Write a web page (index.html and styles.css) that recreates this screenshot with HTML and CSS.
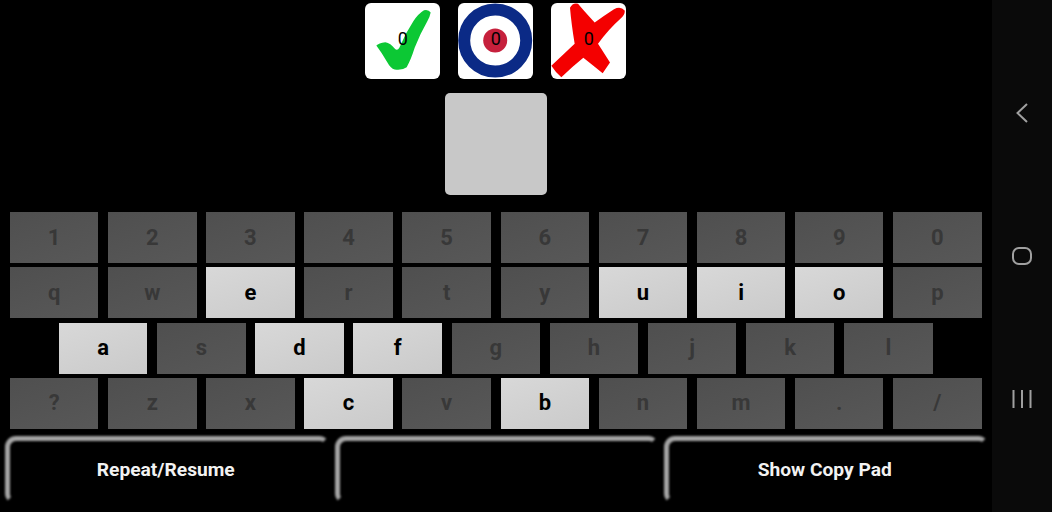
FILE: index.html
```html
<!DOCTYPE html>
<html lang="en">
<head>
    <meta charset="UTF-8">
    <title>Morse Trainer</title>
    <link rel="stylesheet" href="styles.css">
</head>
<body>
    <div class="app">
        <!-- Score tiles -->
        <div class="scores">
            <div class="tile">
                <svg class="tile-icon" viewBox="15 7.5 225 228">
                    <path fill="#0cc834" d="M212 36 Q206 26 192 29 Q174 40 160 62 Q136 98 118 142 Q112 152 104 144 Q92 128 76 125 Q56 128 49 135 Q66 158 80 182 Q92 204 104 207 Q124 211 140 200 Q152 180 164 142 Q180 100 202 62 Q210 48 212 36 Z"/>
                </svg>
                <span class="count">0</span>
            </div>
            <div class="tile">
                <svg class="tile-icon" viewBox="0 0 75 76">
                    <circle cx="37.2" cy="37.5" r="31" fill="none" stroke="#0b2a86" stroke-width="12"/>
                    <circle cx="37.2" cy="37.5" r="12" fill="#c6203c"/>
                </svg>
                <span class="count">0</span>
            </div>
            <div class="tile">
                <svg class="tile-icon" viewBox="19 7.5 225 228">
                    <path fill="#f40000" d="M76 22 Q84 6 100 10 Q120 34 150 66 Q180 44 208 26 Q228 16 240 30 Q242 42 228 54 Q190 88 160 130 Q178 158 196 186 L174 218 Q146 196 116 172 Q84 198 50 230 Q34 218 20 196 Q54 164 90 130 Q80 70 76 22 Z"/>
                </svg>
                <span class="count">0</span>
            </div>
        </div>

        <div class="letter-box"></div>

        <!-- Keyboard -->
        <div class="keyboard">
            <div class="key-row">
                <div class="key">1</div>
                <div class="key">2</div>
                <div class="key">3</div>
                <div class="key">4</div>
                <div class="key">5</div>
                <div class="key">6</div>
                <div class="key">7</div>
                <div class="key">8</div>
                <div class="key">9</div>
                <div class="key">0</div>
            </div>
            <div class="key-row">
                <div class="key">q</div>
                <div class="key">w</div>
                <div class="key active">e</div>
                <div class="key">r</div>
                <div class="key">t</div>
                <div class="key">y</div>
                <div class="key active">u</div>
                <div class="key active">i</div>
                <div class="key active">o</div>
                <div class="key">p</div>
            </div>
            <div class="key-row">
                <div class="key active">a</div>
                <div class="key">s</div>
                <div class="key active">d</div>
                <div class="key active">f</div>
                <div class="key">g</div>
                <div class="key">h</div>
                <div class="key">j</div>
                <div class="key">k</div>
                <div class="key">l</div>
            </div>
            <div class="key-row">
                <div class="key">?</div>
                <div class="key">z</div>
                <div class="key">x</div>
                <div class="key active">c</div>
                <div class="key">v</div>
                <div class="key active">b</div>
                <div class="key">n</div>
                <div class="key">m</div>
                <div class="key">.</div>
                <div class="key">/</div>
            </div>
        </div>

        <!-- Bottom buttons -->
        <div class="actions">
            <div class="action">Repeat/Resume</div>
            <div class="action"></div>
            <div class="action">Show Copy Pad</div>
        </div>
    </div>

    <!-- Android nav bar -->
    <div class="navbar">
        <svg class="nav-icon" viewBox="0 0 24 24">
            <path d="M17 3 L7.5 12 L17 21"/>
        </svg>
        <svg class="nav-icon" viewBox="0 0 24 24">
            <rect x="3" y="4" width="18" height="16" rx="6"/>
        </svg>
        <svg class="nav-icon" viewBox="0 0 24 24">
            <path d="M3.5 3 V21 M12 3 V21 M20.5 3 V21"/>
        </svg>
    </div>
</body>
</html>
```

FILE: styles.css
```css
/* Basic reset */
* {
    margin: 0;
    padding: 0;
    box-sizing: border-box;
}

body {
    display: flex;
    width: 1052px;
    height: 512px;
    overflow: hidden;
    background-color: #000;
    font-family: 'Roboto', sans-serif;
}

.app {
    width: 992px;
    display: flex;
    flex-direction: column;
    align-items: center;
    padding: 2.5px 0.5px 0 0;
}

/* Score tiles */
.scores {
    display: flex;
    gap: 18px;
}

.tile {
    position: relative;
    width: 75px;
    height: 76px;
    background-color: #fff;
    border-radius: 6px;
    overflow: hidden;
}

.tile-icon {
    display: block;
    width: 100%;
    height: 100%;
}

.count {
    position: absolute;
    top: 26px;
    left: 0;
    right: 0;
    text-align: center;
    font-size: 18px;
    line-height: 20px;
    color: #000;
}

.letter-box {
    width: 102px;
    height: 102.5px;
    margin-top: 14px;
    background-color: #c8c8c8;
    border-radius: 5px;
}

/* Keyboard */
.keyboard {
    width: 100%;
    display: flex;
    flex-direction: column;
    align-items: center;
    gap: 4.33px;
    margin-top: 17px;
}

.key-row {
    display: flex;
    gap: 9.65px;
}

.key {
    width: 88.5px;
    height: 51px;
    display: flex;
    align-items: center;
    justify-content: center;
    padding-bottom: 1px;
    background: linear-gradient(160deg, #4f4f4f, #585858);
    color: #383838;
    font-size: 22px;
    font-weight: 700;
}

.key.active {
    background: linear-gradient(160deg, #d8d8d8, #cacaca);
    color: #000;
}

/* Bottom buttons */
.actions {
    width: 100%;
    display: flex;
    gap: 8px;
    margin-top: 7px;
    padding-left: 5px;
    padding-right: 6px;
}

.action {
    position: relative;
    flex: 1;
    height: 67px;
    display: flex;
    align-items: center;
    justify-content: center;
    color: #f2f2f2;
    font-size: 19.2px;
    font-weight: 700;
}

.action::before {
    content: "";
    position: absolute;
    inset: 0 -2px 0 0;
    border-top: 5px solid #a4a4a4;
    border-left: 5px solid #a4a4a4;
    border-right: 5px solid transparent;
    border-bottom: 5px solid transparent;
    border-radius: 11px 9px 0 9px;
    filter: blur(1px);
}

/* Nav bar */
.navbar {
    width: 60px;
    display: flex;
    flex-direction: column;
    align-items: center;
    justify-content: center;
    gap: 119px;
    background-color: #0a0a0a;
}

.nav-icon {
    width: 24px;
    height: 24px;
    fill: none;
    stroke: #a0a0a0;
    stroke-width: 2;
}
```
